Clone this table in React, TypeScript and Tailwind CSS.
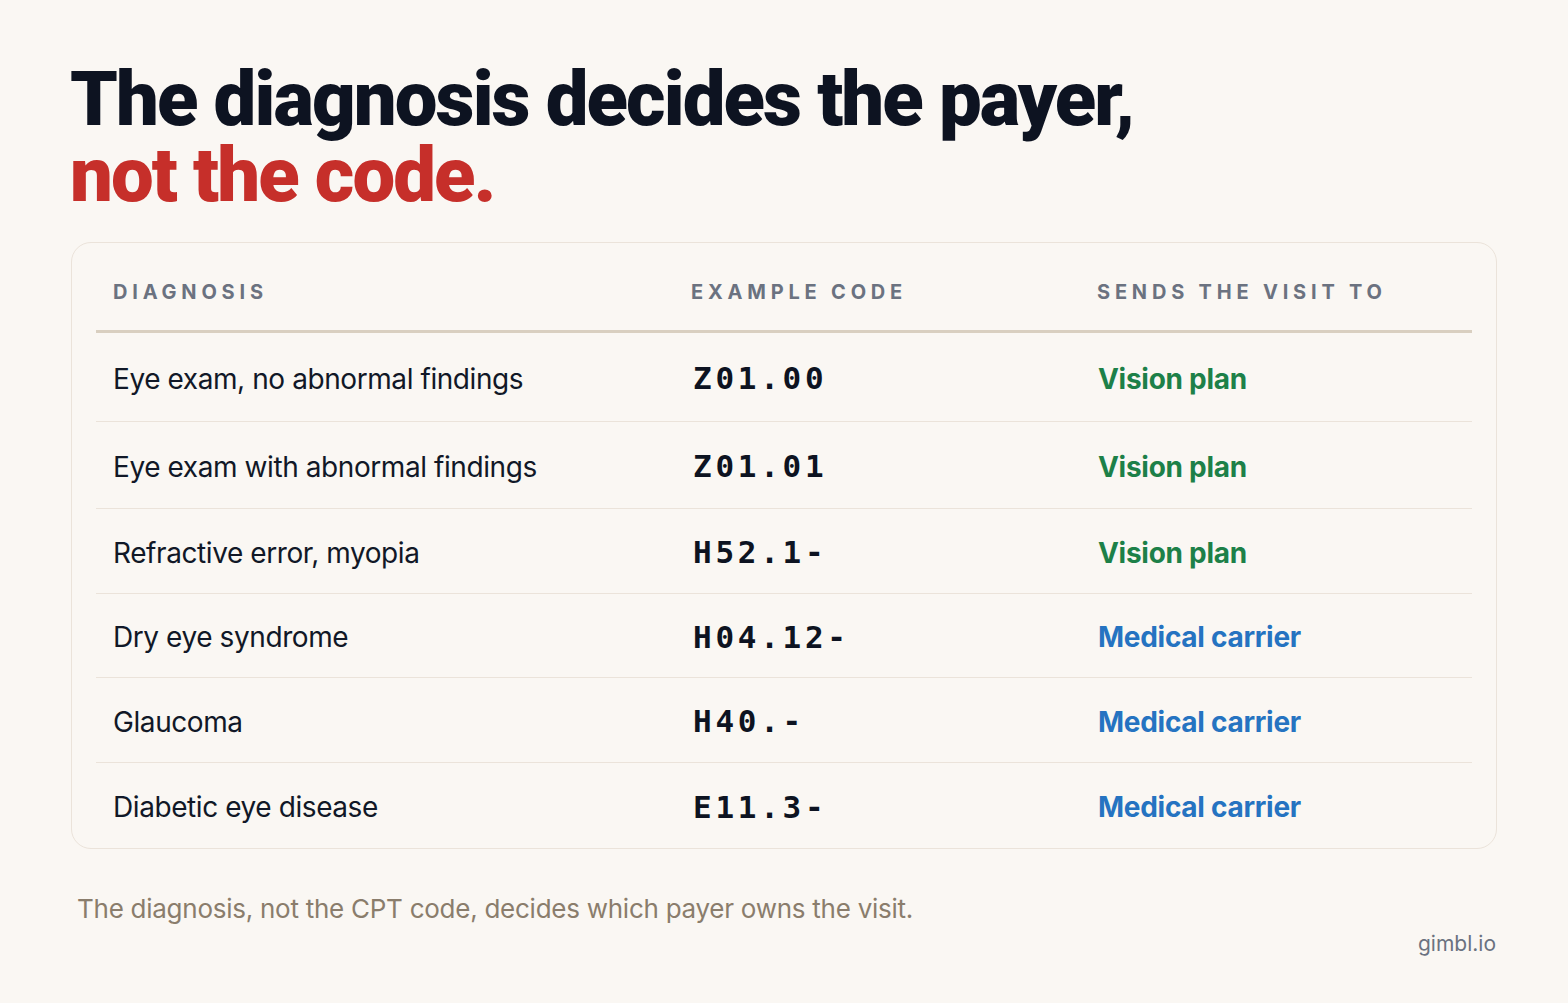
import React from "react"

type Row = { diagnosis: string; code: string; payer: "vision" | "medical"; h: string }

const rows: Row[] = [
  { diagnosis: "Eye exam, no abnormal findings", code: "Z01.00", payer: "vision", h: "h-[89px]" },
  { diagnosis: "Eye exam with abnormal findings", code: "Z01.01", payer: "vision", h: "h-[87px]" },
  { diagnosis: "Refractive error, myopia", code: "H52.1-", payer: "vision", h: "h-[85px]" },
  { diagnosis: "Dry eye syndrome", code: "H04.12-", payer: "medical", h: "h-[84px]" },
  { diagnosis: "Glaucoma", code: "H40.-", payer: "medical", h: "h-[85px]" },
  { diagnosis: "Diabetic eye disease", code: "E11.3-", payer: "medical", h: "h-[85px]" },
]

export default function App() {
  return (
    <div className="w-[1568px] h-[1003px] bg-[#faf7f3] font-['Inter',sans-serif] px-[70px] pt-[61px]">
      <h1 className="font-['Roboto',sans-serif] text-[76px] leading-[76px] font-black tracking-[-0.025em] text-[#0d1321]">
        <div>The diagnosis decides the payer,</div>
        <div className="text-[#c62f2a]">not the code.</div>
      </h1>

      <div className="mt-[29px] ml-px w-[1426px] rounded-[20px] border border-[#ebe3da] bg-[#faf7f3] px-[24px]">
        <div className="grid grid-cols-[578px_406px_1fr] pt-[37px] pb-[26px] border-b-[3px] border-[#d9cfc0]">
          {["Diagnosis", "Example code", "Sends the visit to"].map((h) => (
            <div key={h} className="pl-[17px] text-[20px] leading-[24px] font-bold uppercase tracking-[0.24em] text-[#6b7280]">{h}</div>
          ))}
        </div>
        {rows.map((row, i) => (
          <div
            key={row.code}
            className={
              "grid grid-cols-[578px_406px_1fr] items-center pt-[3px] " + row.h + " " +
              (i < rows.length - 1 ? "border-b border-[#ebe3da]" : "")
            }
          >
            <div className="pl-[17px] text-[28px] text-[#111827] tracking-[-0.015em]">{row.diagnosis}</div>
            <div className="pl-[19px] font-['DejaVu_Sans_Mono',monospace] font-bold text-[31px] tracking-[0.12em] text-[#0d1321]">{row.code}</div>
            <div
              className={
                "pl-[18px] text-[28px] font-bold tracking-[-0.01em] " +
                (row.payer === "vision" ? "text-[#1d8048]" : "text-[#2573c1]")
              }
            >
              {row.payer === "vision" ? "Vision plan" : "Medical carrier"}
            </div>
          </div>
        ))}
      </div>

      <p className="mt-[40px] ml-[7px] text-[26px] text-[#8a7d6c] tracking-[-0.01em]">
        The diagnosis, not the CPT code, decides which payer owns the visit.
      </p>
      <div className="flex justify-end pr-[2px]">
        <span className="text-[21px] text-[#6b7280]">gimbl.io</span>
      </div>
    </div>
  )
}
